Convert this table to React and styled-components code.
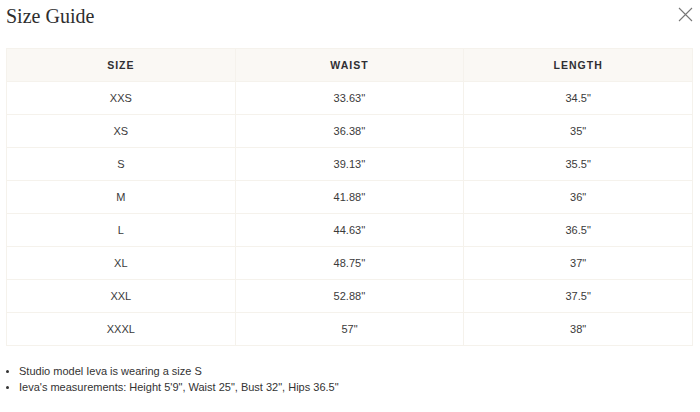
import React from 'react';
import styled, { createGlobalStyle } from 'styled-components';

const Global = createGlobalStyle`
  body {
    margin: 0;
    background: #fff;
    font-family: "Liberation Sans", Arial, sans-serif;
    color: #333;
  }
`;

const Modal = styled.div`
  padding: 4px 7px 0 6px;
`;

const Header = styled.div`
  display: flex;
  justify-content: space-between;
  align-items: flex-start;
  height: 44px;
  h2 {
    margin: 0;
    font-family: "Liberation Serif", "Times New Roman", serif;
    font-weight: 400;
    font-size: 20px;
    line-height: 24px;
    color: #2e2e2e;
  }
`;

const Close = styled.button`
  border: none;
  background: none;
  padding: 0;
  margin-top: 3px;
  width: 15px;
  height: 15px;
  cursor: pointer;
  svg {
    display: block;
  }
`;

const Table = styled.table`
  width: 100%;
  border-collapse: collapse;
  table-layout: fixed;
  th,
  td {
    border: 1px solid #f5f2ec;
    text-align: center;
    height: 32px;
    padding: 0;
  }
  th {
    background: #faf8f4;
    font-size: 10.5px;
    font-weight: 700;
    letter-spacing: 1px;
    color: #2f2f33;
  }
  td {
    font-size: 11px;
    color: #3a3a3a;
  }
`;

const Notes = styled.ul`
  margin: 17px 0 0;
  padding-left: 13px;
  font-size: 11px;
  line-height: 16px;
  color: #333;
  li::marker {
    font-size: 10px;
  }
`;

const rows = [
  ['XXS', '33.63\'\'', '34.5"'],
  ['XS', '36.38\'\'', '35"'],
  ['S', '39.13\'\'', '35.5"'],
  ['M', '41.88\'\'', '36"'],
  ['L', '44.63\'\'', '36.5"'],
  ['XL', '48.75\'\'', '37"'],
  ['XXL', '52.88\'\'', '37.5"'],
  ['XXXL', '57"', '38"'],
];

export default function App() {
  return (
    <Modal>
      <Global />
      <Header>
        <h2>Size Guide</h2>
        <Close aria-label="Close">
          <svg width="15" height="15" viewBox="0 0 15 15">
            <path d="M1 1L14 14M14 1L1 14" stroke="#777" strokeWidth="1.1" fill="none" />
          </svg>
        </Close>
      </Header>
      <Table>
        <thead>
          <tr>
            <th>SIZE</th>
            <th>WAIST</th>
            <th>LENGTH</th>
          </tr>
        </thead>
        <tbody>
          {rows.map((r) => (
            <tr key={r[0]}>
              {r.map((c, i) => (
                <td key={i}>{c}</td>
              ))}
            </tr>
          ))}
        </tbody>
      </Table>
      <Notes>
        <li>Studio model Ieva is wearing a size S</li>
        <li>Ieva's measurements: Height 5'9", Waist 25", Bust 32", Hips 36.5"</li>
      </Notes>
    </Modal>
  );
}
